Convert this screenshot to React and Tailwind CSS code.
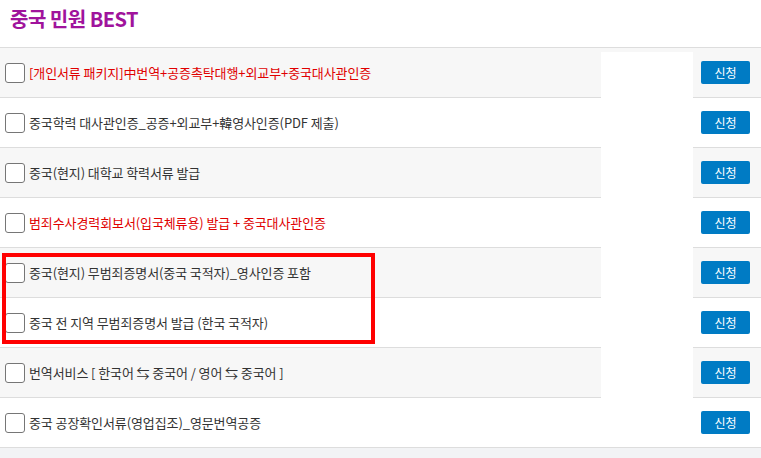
import React from "react";

const items = [
  { text: "[개인서류 패키지]中번역+공증촉탁대행+외교부+중국대사관인증", red: true },
  { text: "중국학력 대사관인증_공증+외교부+韓영사인증(PDF 제출)" },
  { text: "중국(현지) 대학교 학력서류 발급" },
  { text: "범죄수사경력회보서(입국체류용) 발급 + 중국대사관인증", red: true },
  { text: "중국(현지) 무범죄증명서(중국 국적자)_영사인증 포함" },
  { text: "중국 전 지역 무범죄증명서 발급 (한국 국적자)" },
  { text: "번역서비스 [ 한국어 ⇆ 중국어 / 영어 ⇆ 중국어 ]" },
  { text: "중국 공장확인서류(영업집조)_영문번역공증" },
];

const App = () => {
  return (
    <div
      className="relative w-full min-h-screen bg-[#f2f3f5]"
      style={{ fontFamily: '"Noto Sans CJK KR", "Noto Sans", sans-serif' }}
    >
      {/* Title */}
      <div className="bg-white h-[47px] pl-[10px] pt-[2px]">
        <h2 className="text-[20px] font-bold text-[#a0139c] tracking-[-0.5px] leading-[34px]">
          중국 민원 BEST
        </h2>
      </div>

      {/* List */}
      <ul className="border-t border-[#dddddd]">
        {items.map((item, i) => (
          <li
            key={i}
            className={`flex items-center h-[50px] border-b border-[#dddddd] pl-[5px] pr-[11px] ${
              i % 2 === 0 ? "bg-[#f7f7f7]" : "bg-white"
            }`}
          >
            <span className="w-[20px] h-[20px] rounded-[3px] border border-[#767676] bg-white shrink-0" />
            <span
              className={`ml-[4px] text-[13px] tracking-[-0.1px] ${
                item.red ? "text-[#e00000]" : "text-[#333333]"
              }`}
            >
              {item.text}
            </span>
            <button className="ml-auto w-[49px] h-[23px] rounded-[2px] bg-[#007bc4] text-white text-[12px] leading-none">
              신청
            </button>
          </li>
        ))}
      </ul>

      {/* Empty white column over the rows */}
      <div className="absolute left-[601px] top-[52px] w-[92px] h-[395px] bg-white" />

      {/* Highlight box */}
      <div className="absolute left-[2px] top-[253px] w-[373px] h-[91px] border-4 border-[#ff0000]" />
    </div>
  );
};

export default App;
